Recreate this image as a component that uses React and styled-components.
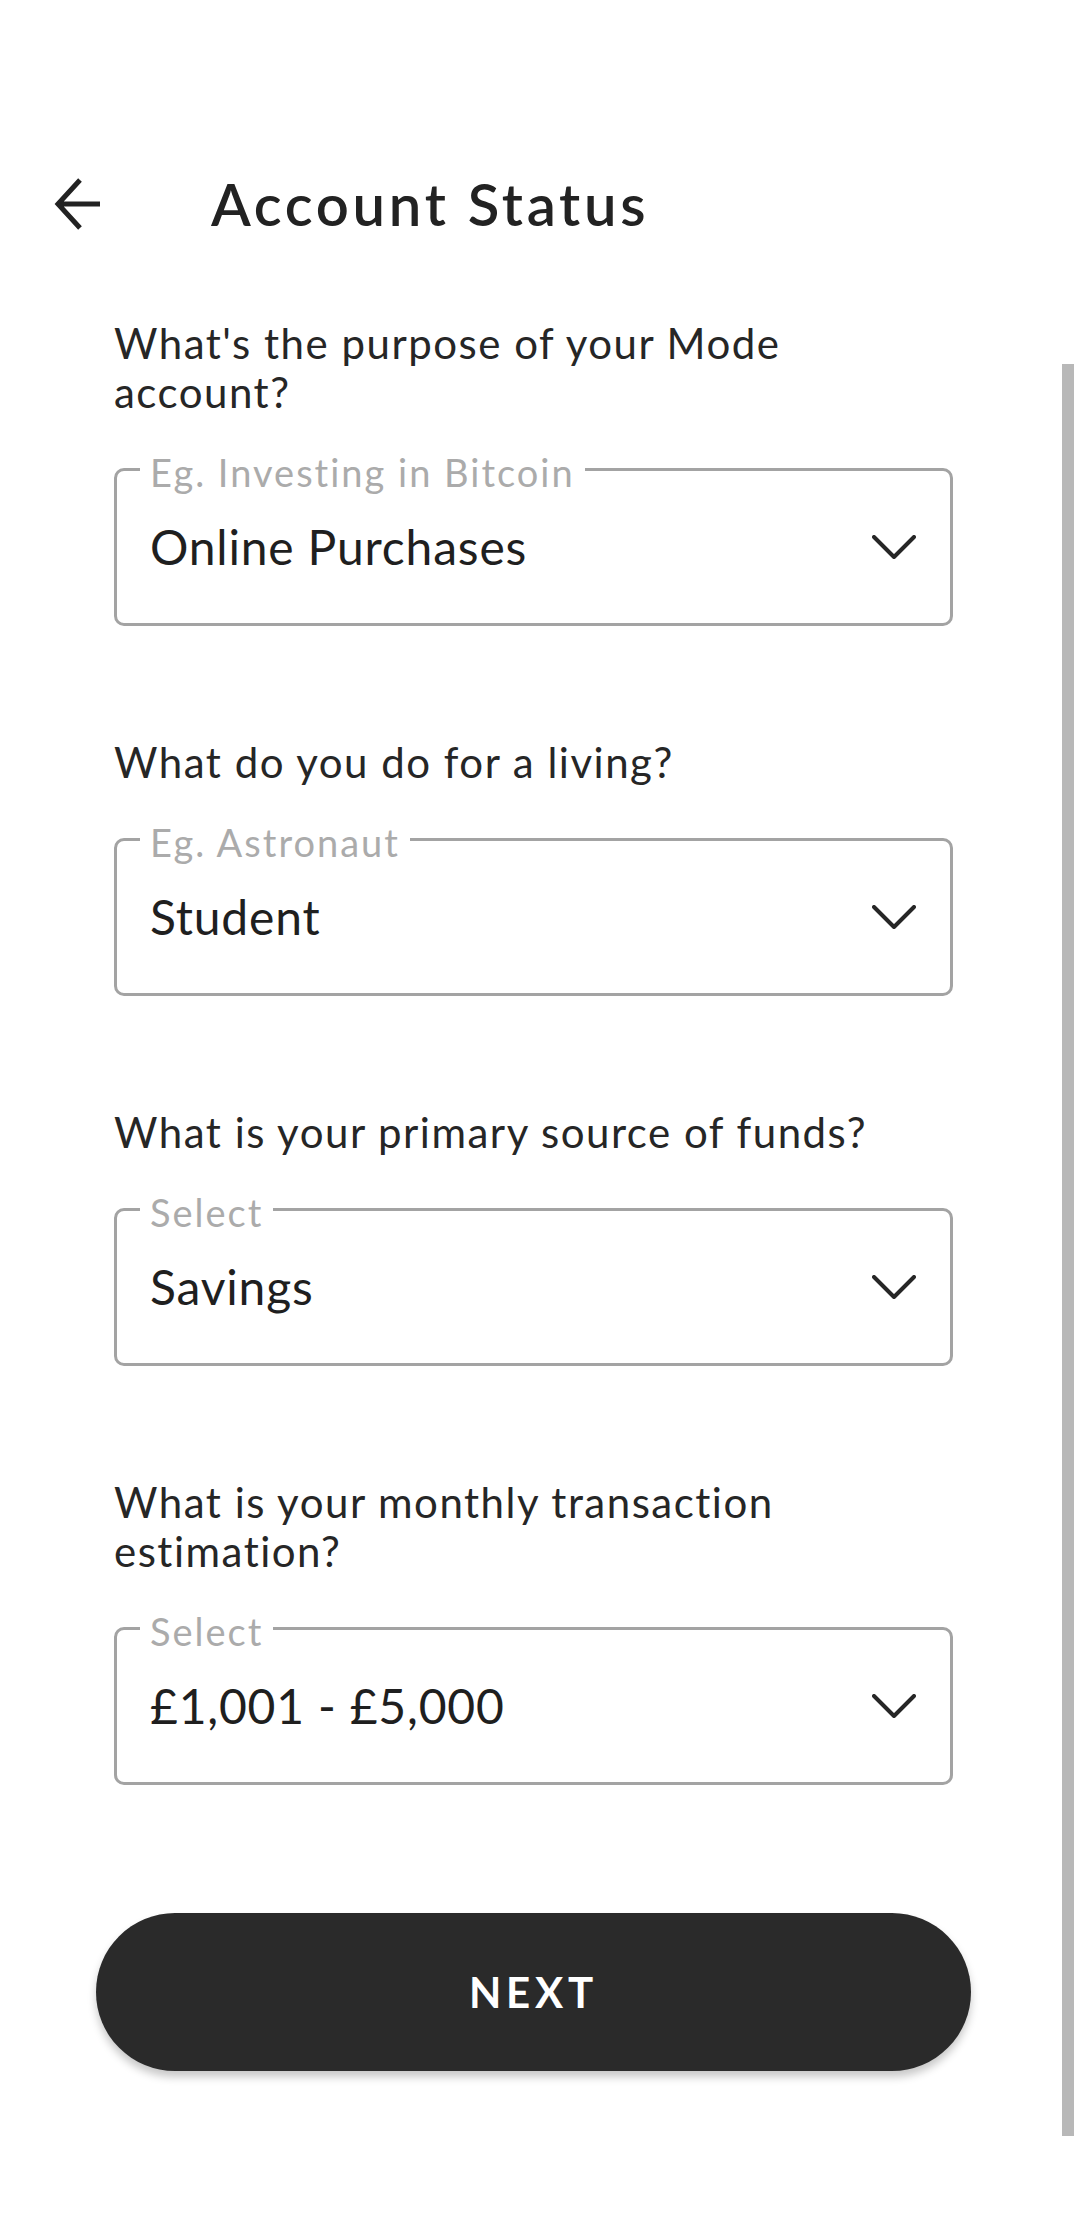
import React from 'react';
import styled, { createGlobalStyle } from 'styled-components';

const GlobalStyle = createGlobalStyle`
  html, body {
    margin: 0;
    padding: 0;
    background: #ffffff;
  }
  body {
    font-family: Lato, "Noto Sans", sans-serif;
    -webkit-font-smoothing: antialiased;
  }
  * {
    box-sizing: border-box;
  }
`;

const Screen = styled.div`
  position: relative;
  min-height: 2214px;
  padding-top: 144px;
  overflow: hidden;
`;

const Header = styled.header`
  display: flex;
  align-items: center;
  height: 120px;
  padding-left: 54px;
`;

const BackButton = styled.button`
  display: flex;
  align-items: center;
  justify-content: center;
  width: 48px;
  height: 52px;
  margin-right: 109px;
  padding: 0;
  border: 0;
  background: none;
  color: #222222;
  cursor: pointer;
`;

const Title = styled.h1`
  margin: 0;
  font-size: 58px;
  font-weight: 600;
  line-height: 70px;
  letter-spacing: 3.7px;
  color: #222222;
`;

const Form = styled.main`
  display: flex;
  flex-direction: column;
  gap: 112px;
  padding: 55px 127px 0 114px;
`;

const Field = styled.section`
  display: flex;
  flex-direction: column;
  gap: 51px;
`;

const Question = styled.p`
  max-width: 800px;
  margin: 0;
  font-size: 42px;
  line-height: 49px;
  font-weight: 400;
  letter-spacing: 1.5px;
  color: #262626;
`;

const SelectBox = styled.div`
  position: relative;
  display: flex;
  align-items: center;
  justify-content: space-between;
  height: 158px;
  padding: 0 34px 0 33px;
  border: 3px solid #a3a3a3;
  border-radius: 10px;
  cursor: pointer;
`;

const FloatLabel = styled.span`
  position: absolute;
  top: -19px;
  left: 23px;
  padding: 0 10px;
  background: #ffffff;
  font-size: 38px;
  line-height: 40px;
  letter-spacing: 2px;
  color: #ababab;
`;

const Value = styled.span`
  font-size: 48px;
  line-height: 56px;
  letter-spacing: 0.8px;
  color: #1f1f1f;
`;

const NextButton = styled.button`
  height: 158px;
  margin: 16px -18px 0;
  border: 0;
  border-radius: 79px;
  background: #2a2a2a;
  box-shadow: 0 6px 8px rgba(0, 0, 0, 0.22);
  color: #ffffff;
  font-family: Lato, "Noto Sans", sans-serif;
  font-size: 42px;
  font-weight: 700;
  letter-spacing: 4.8px;
  cursor: pointer;
`;

const ScrollThumb = styled.div`
  position: absolute;
  top: 364px;
  right: 6px;
  width: 12px;
  height: 1772px;
  background: #b8b8b8;
`;

const BackArrow = () => (
  <svg width="48" height="52" viewBox="0 0 48 52" fill="none">
    <path
      d="M46 26H4M26 2L4 26L26 50"
      stroke="currentColor"
      strokeWidth="5"
      strokeLinecap="butt"
      strokeLinejoin="miter"
    />
  </svg>
);

const Chevron = () => (
  <svg width="44" height="24" viewBox="0 0 44 24" fill="none">
    <polyline
      points="2,2 22,22 42,2"
      stroke="#262626"
      strokeWidth="4"
      strokeLinecap="round"
      strokeLinejoin="round"
    />
  </svg>
);

const fields = [
  {
    question: "What's the purpose of your Mode account?",
    label: 'Eg. Investing in Bitcoin',
    value: 'Online Purchases',
  },
  {
    question: 'What do you do for a living?',
    label: 'Eg. Astronaut',
    value: 'Student',
  },
  {
    question: 'What is your primary source of funds?',
    label: 'Select',
    value: 'Savings',
  },
  {
    question: 'What is your monthly transaction estimation?',
    label: 'Select',
    value: '£1,001 - £5,000',
  },
];

function App() {
  return (
    <Screen>
      <GlobalStyle />
      <Header>
        <BackButton aria-label="Back">
          <BackArrow />
        </BackButton>
        <Title>Account Status</Title>
      </Header>
      <Form>
        {fields.map((f, key) => (
          <Field key={key}>
            <Question>{f.question}</Question>
            <SelectBox>
              <FloatLabel>{f.label}</FloatLabel>
              <Value>{f.value}</Value>
              <Chevron />
            </SelectBox>
          </Field>
        ))}
        <NextButton>NEXT</NextButton>
      </Form>
      <ScrollThumb />
    </Screen>
  );
}

export default App;
